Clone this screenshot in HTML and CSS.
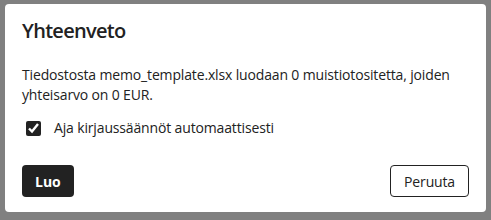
FILE: index.html
```html
<!DOCTYPE html>
<html lang="fi">
<head>
    <meta charset="UTF-8">
    <title>Yhteenveto</title>
    <link rel="stylesheet" href="styles.css">
</head>
<body>
    <div class="dialog">
        <h2 class="title">Yhteenveto</h2>
        <p class="summary">Tiedostosta memo_template.xlsx luodaan 0 muistiotositetta, joiden yhteisarvo on 0 EUR.</p>
        <label class="option">
            <input type="checkbox" checked>
            <span>Aja kirjaussäännöt automaattisesti</span>
        </label>
        <div class="actions">
            <button class="btn primary">Luo</button>
            <button class="btn secondary">Peruuta</button>
        </div>
    </div>
</body>
</html>
```

FILE: styles.css
```css
body {
    margin: 0;
    padding: 4px 5px;
    background-color: #808080;
    font-family: "Open Sans", sans-serif;
    color: #222;
}
.dialog {
    width: 481px;
    height: 208px;
    box-sizing: border-box;
    background-color: #fff;
    border-radius: 4px;
    padding: 14px 17px 15px;
    display: flex;
    flex-direction: column;
}
.title {
    margin: 0;
    font-size: 20px;
    font-weight: 600;
    letter-spacing: -0.7px;
    line-height: 26px;
}
.summary {
    margin: 21px 0 0;
    font-size: 14px;
    letter-spacing: -0.15px;
    line-height: 20px;
}
.option {
    display: flex;
    align-items: center;
    gap: 13px;
    margin-top: 13px;
    font-size: 14px;
    letter-spacing: -0.15px;
    line-height: 20px;
}
.option input {
    margin: 0 0 0 4px;
    width: 15px;
    height: 15px;
    accent-color: #222;
}
.actions {
    margin-top: auto;
    display: flex;
    justify-content: space-between;
}
.btn {
    height: 32px;
    padding: 0 13px;
    font-family: inherit;
    font-size: 14px;
    border-radius: 4px;
    cursor: pointer;
}
.primary {
    background-color: #222;
    color: #fff;
    border: none;
    font-weight: 700;
}
.secondary {
    background-color: #fff;
    color: #222;
    border: 1px solid #222;
    letter-spacing: -0.15px;
}
```
